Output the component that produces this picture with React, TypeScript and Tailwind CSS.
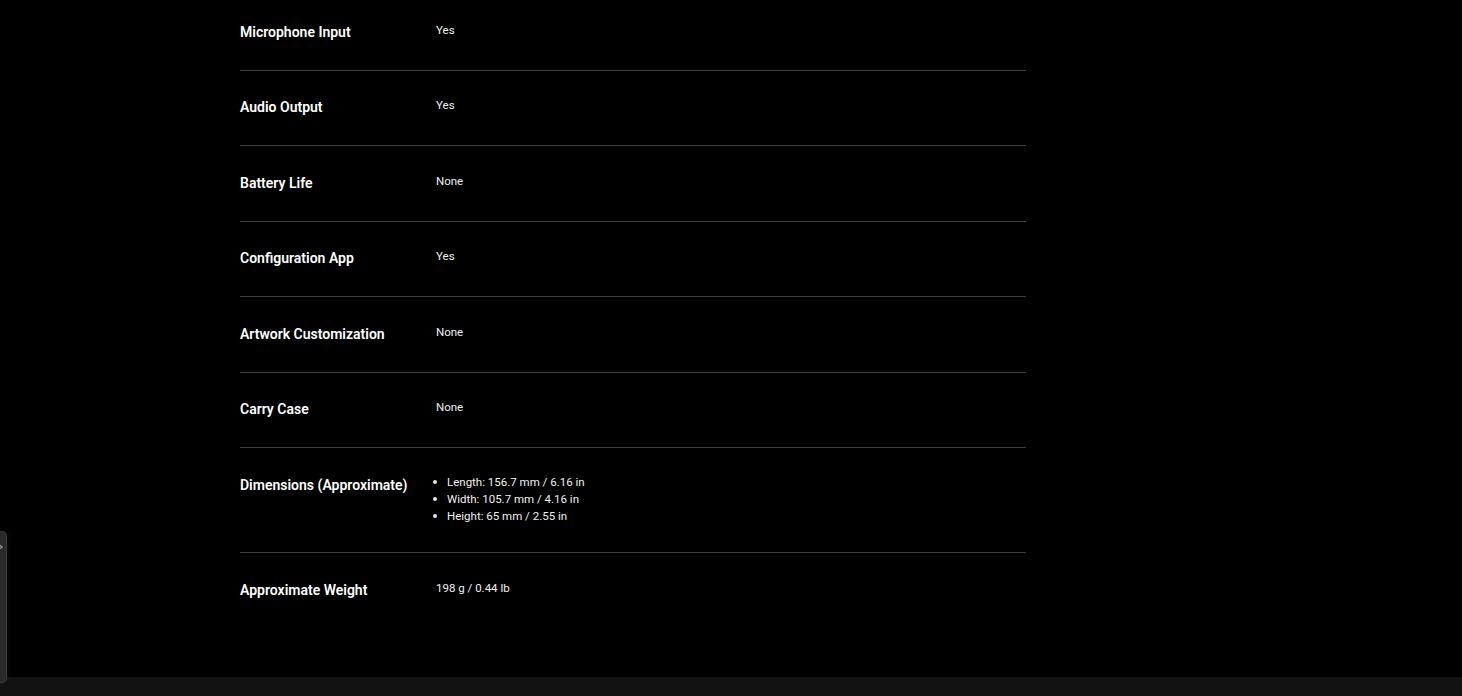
import React from 'react';

type Spec = { label: string; value: string | string[] };

const specs: Spec[] = [
  { label: 'Microphone Input', value: 'Yes' },
  { label: 'Audio Output', value: 'Yes' },
  { label: 'Battery Life', value: 'None' },
  { label: 'Configuration App', value: 'Yes' },
  { label: 'Artwork Customization', value: 'None' },
  { label: 'Carry Case', value: 'None' },
  {
    label: 'Dimensions (Approximate)',
    value: ['Length: 156.7 mm / 6.16 in', 'Width: 105.7 mm / 4.16 in', 'Height: 65 mm / 2.55 in'],
  },
  { label: 'Approximate Weight', value: '198 g / 0.44 lb' },
];

const SpecRow = ({ spec, last }: { spec: Spec; last: boolean }) => (
  <div className={`flex items-start pt-[26.5px] pb-[26.5px] ${last ? '' : 'border-b border-[#3d3d3d]'}`}>
    <div className="w-[196px] shrink-0 pt-[1px] pb-[2px] text-[14px] leading-[18.5px] font-semibold text-white">
      {spec.label}
    </div>
    <div className="text-[11.5px] leading-[17px] font-normal text-[#f0f0f0]">
      {Array.isArray(spec.value) ? (
        <ul className="-ml-[3px] -mt-[1px] pb-[1px]">
          {spec.value.map((v) => (
            <li key={v} className="flex items-center">
              <span className="w-[4px] h-[4px] rounded-full bg-[#e5e5e5] mr-[10px]" />
              {v}
            </li>
          ))}
        </ul>
      ) : (
        spec.value
      )}
    </div>
  </div>
);

const App = () => {
  return (
    <div className="relative min-h-[696px] bg-black flex flex-col font-['Roboto',sans-serif] overflow-hidden">
      <div className="flex-1">
        <div className="w-[786px] ml-[240px] -mt-[5px]">
          {specs.map((s, i) => (
            <SpecRow key={s.label} spec={s} last={i === specs.length - 1} />
          ))}
        </div>
      </div>
      <div className="h-[19px] bg-[#121212]" />

      {/* collapsed side drawer peeking in from the left */}
      <div className="absolute left-[-10px] top-[531px] w-[17px] h-[152px] rounded-r-[5px] bg-[#2a2a2a] border border-[#3a3a3a] shadow-[0_0_6px_rgba(255,255,255,0.08)]">
        <svg
          className="absolute left-[5px] top-[9px]"
          width="9"
          height="12"
          viewBox="0 0 9 12"
          fill="none"
          stroke="#8a8f99"
          strokeWidth="1.4"
        >
          <path d="M1 2l5 4-5 4" />
        </svg>
      </div>
    </div>
  );
};

export default App;
